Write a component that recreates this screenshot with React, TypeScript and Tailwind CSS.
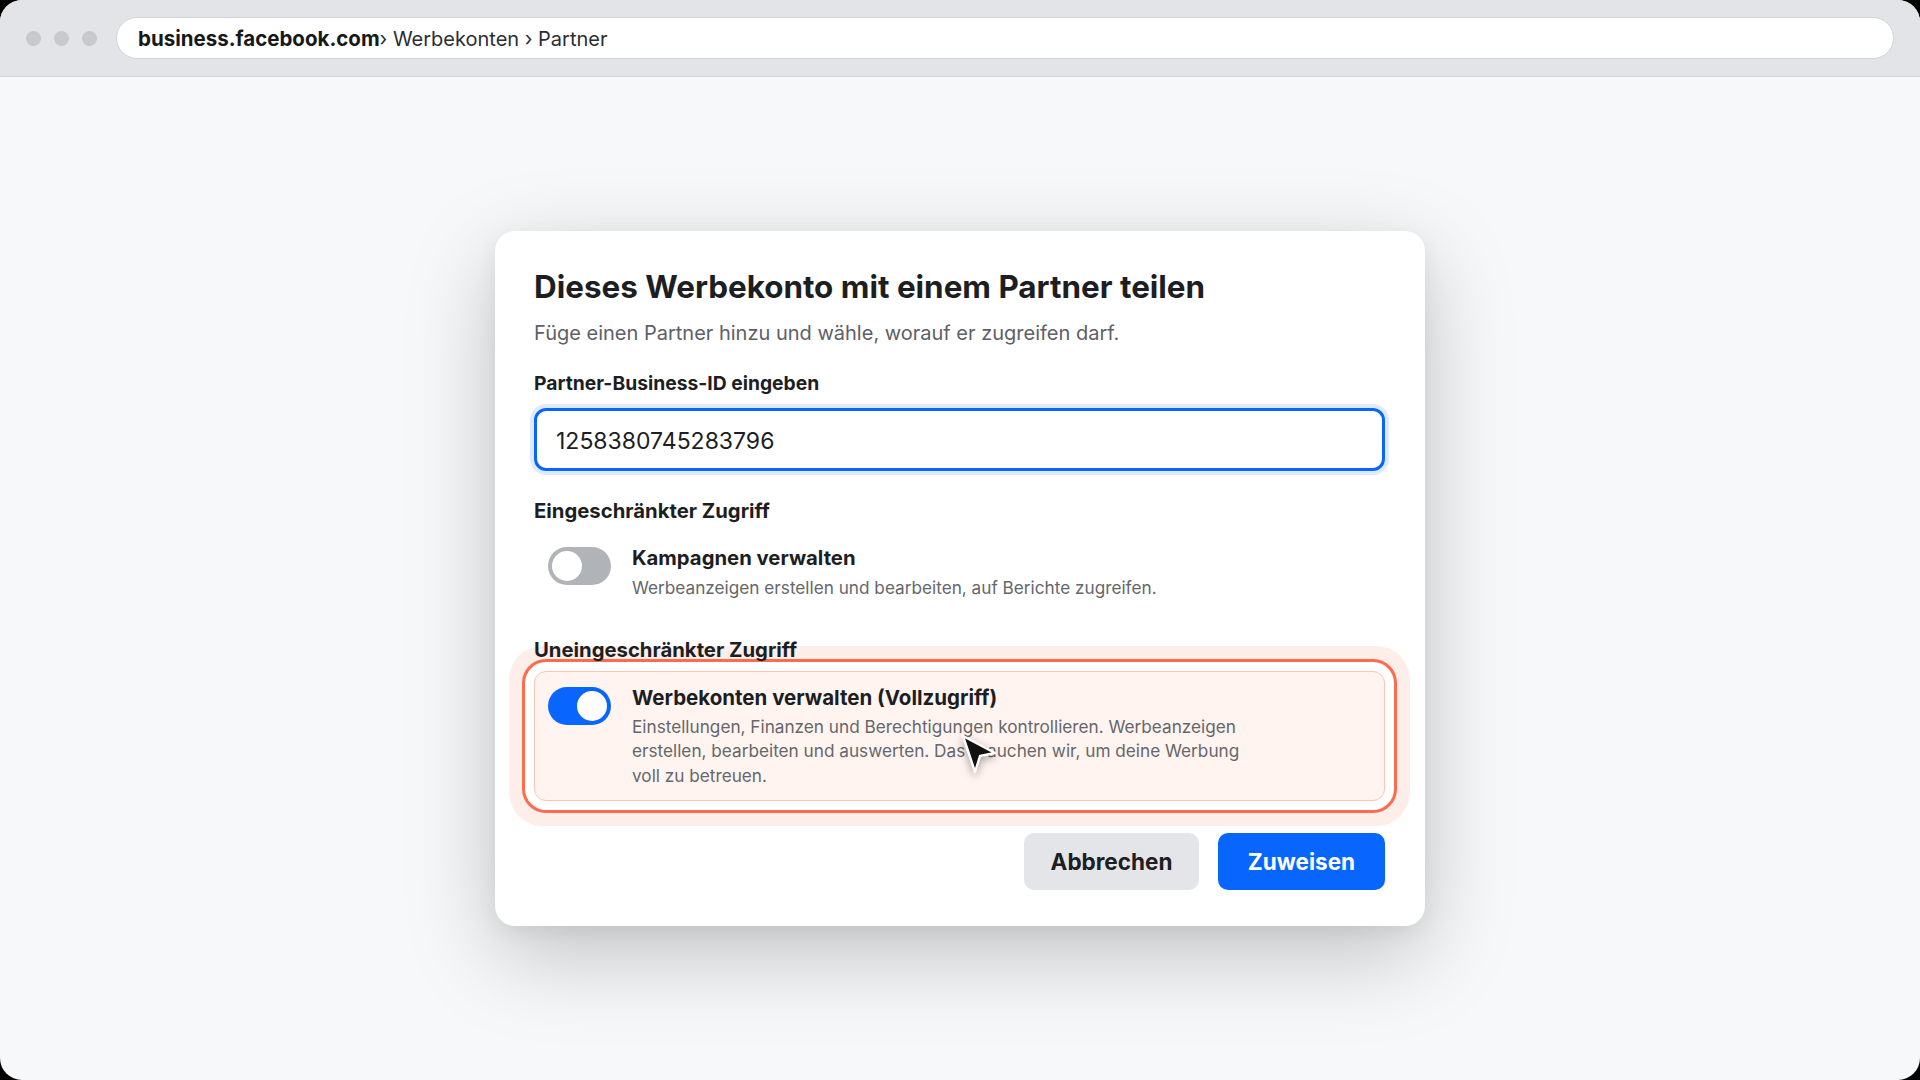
import React from 'react';

type ToggleProps = { on: boolean };

const Toggle: React.FC<ToggleProps> = ({ on }) => (
  <div
    className={`mt-[3px] flex h-[38px] w-[63px] shrink-0 items-center rounded-full px-[4px] ${
      on ? 'justify-end bg-[#0866ff]' : 'justify-start bg-[#b0b3b8]'
    }`}
  >
    <div className="h-[30px] w-[30px] rounded-full bg-white" />
  </div>
);

const Cursor: React.FC = () => (
  <svg
    className="pointer-events-none absolute left-[425px] top-[61px] drop-shadow-[0_3px_4px_rgba(0,0,0,0.35)]"
    width="44"
    height="44"
    viewBox="0 0 44 44"
  >
    <path d="M3 3 L35 20 L20 23 L15 39 Z" fill="#111" stroke="#fff" strokeWidth="2.4" strokeLinejoin="round" />
  </svg>
);

const App: React.FC = () => {
  return (
    <div className="h-screen w-screen bg-black font-['Inter',sans-serif]">
      <div className="flex h-full flex-col overflow-hidden rounded-[22px] bg-[#f7f8fa]">
        {/* browser chrome */}
        <div className="flex h-[77px] shrink-0 items-center border-b border-[#d5d6da] bg-[#e3e4e8] pl-[26px] pr-[26px]">
          <div className="flex gap-[13px]">
            <div className="h-[15px] w-[15px] rounded-full bg-[#c8c9cd]" />
            <div className="h-[15px] w-[15px] rounded-full bg-[#c8c9cd]" />
            <div className="h-[15px] w-[15px] rounded-full bg-[#c8c9cd]" />
          </div>
          <div className="ml-[19px] flex h-[42px] flex-1 items-center rounded-full border border-[#d3d4d8] bg-white pl-[21px] pr-[22px] pt-[2px] text-[20.5px] text-[#2b2d31]">
            <span className="font-bold text-[#17181a]">business.facebook.com</span>
            <span className="text-[20px]">› Werbekonten › Partner</span>
          </div>
        </div>

        {/* page */}
        <div className="flex flex-1 items-center justify-center">
          <div className="w-[930px] rounded-[20px] bg-white pb-9 pl-[39px] pr-10 pt-[38px] shadow-[0_28px_90px_rgba(0,0,0,0.22),0_6px_20px_rgba(0,0,0,0.06)]">
            <h1 className="text-[31.4px] font-bold leading-[36px] text-[#1c1e21]">
              Dieses Werbekonto mit einem Partner teilen
            </h1>
            <p className="mt-[14px] text-[20px] leading-[28px] text-[#5d6066]">
              Füge einen Partner hinzu und wähle, worauf er zugreifen darf.
            </p>

            <label className="mt-[23px] block text-[19.3px] font-bold leading-[26px] text-[#1c1e21]">
              Partner-Business-ID eingeben
            </label>
            <div className="mt-[12px] flex h-[63px] items-center rounded-[12px] border-[3px] border-[#0866ff] px-[19px] pt-[3px] text-[23px] text-[#1c1e21] shadow-[0_0_0_4px_#dfeaff]">
              1258380745283796
            </div>

            <div className="mt-[26px] text-[20.3px] font-bold leading-[28px] text-[#1c1e21]">
              Eingeschränkter Zugriff
            </div>
            <div className="mt-[6px] flex gap-[21px] px-[14px] py-[13px]">
              <Toggle on={false} />
              <div>
                <div className="text-[20.3px] font-bold leading-[28px] text-[#1c1e21]">Kampagnen verwalten</div>
                <div className="mt-[4px] text-[17.2px] leading-[24px] text-[#65676b]">
                  Werbeanzeigen erstellen und bearbeiten, auf Berichte zugreifen.
                </div>
              </div>
            </div>

            <div className="relative z-10 mt-[23px] text-[20.3px] font-bold leading-[28px] text-[#1c1e21]">
              Uneingeschränkter Zugriff
            </div>
            <div className="relative mt-[7px] flex gap-[21px] rounded-[12px] border-[1.5px] border-[#ffc4b4] bg-[#fff4f0] px-[13px] py-[12px] shadow-[0_0_0_9px_#ffffff,0_0_0_12px_#ff6b4d,0_0_0_25px_#fdeee9]">
              <Toggle on={true} />
              <div>
                <div className="text-[20.5px] font-bold leading-[28px] text-[#1c1e21]">
                  Werbekonten verwalten (Vollzugriff)
                </div>
                <div className="mt-[3px] max-w-[632px] text-[17.2px] leading-[24.5px] text-[#65676b]">
                  Einstellungen, Finanzen und Berechtigungen kontrollieren. Werbeanzeigen erstellen, bearbeiten und
                  auswerten. Das brauchen wir, um deine Werbung voll zu betreuen.
                </div>
              </div>
              <Cursor />
            </div>

            <div className="mt-[32px] flex justify-end gap-[19px]">
              <button className="flex h-[57px] w-[175px] items-center justify-center rounded-[10px] bg-[#e4e5e9] text-[22.5px] font-bold text-[#1c1e21]">
                Abbrechen
              </button>
              <button className="flex h-[57px] w-[167px] items-center justify-center rounded-[10px] bg-[#0866ff] text-[22.5px] font-bold text-white">
                Zuweisen
              </button>
            </div>
          </div>
        </div>
      </div>
    </div>
  );
};

export default App;
